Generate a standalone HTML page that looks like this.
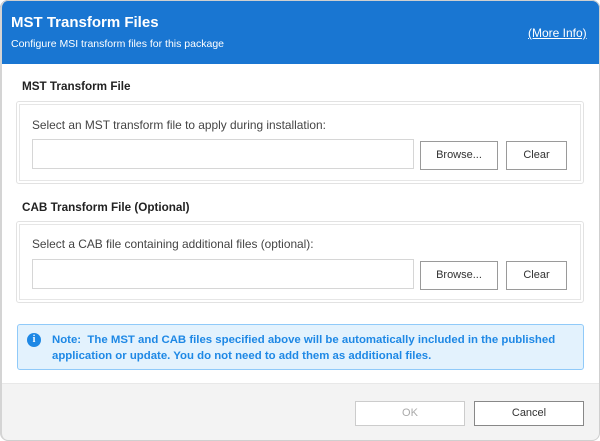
<!DOCTYPE html>
<html><head><style>
*{box-sizing:border-box;margin:0;padding:0}
body{width:600px;height:441px;background:#fff;font-family:"Liberation Sans",sans-serif;position:relative;overflow:hidden}
.win{position:absolute;left:0;top:0;width:600px;height:441px;border-radius:8px;overflow:hidden;background:#fff}
.frame{position:absolute;left:0;top:0;width:600px;height:441px;border:1px solid #cfcfcf;border-left:2px solid #d4d4d4;border-radius:8px;pointer-events:none}
.hdr{position:absolute;left:0;top:0;width:600px;height:64px;background:#1976d2;color:#fff}
.t{position:absolute;left:11px;top:14px;font-size:15px;font-weight:bold}
.st{position:absolute;left:11px;top:38px;font-size:10.5px}
.mi{position:absolute;left:528px;top:26px;font-size:12px;text-decoration:underline}
.lbl{position:absolute;left:22px;font-size:11.7px;font-weight:bold;color:#222}
.g{position:absolute;left:16px;width:568px;border:1px solid #e2e2e2;border-radius:3px}
.gi{position:absolute;left:2px;top:2px;right:2px;bottom:2px;border:1px solid #e6e6e6}
.sel{position:absolute;left:15px;font-size:11.9px;color:#444}
.in{position:absolute;width:382px;height:30px;border:1px solid #d6d6d6;background:#fff}
.b{position:absolute;height:29px;border:1px solid #9a9a9a;background:#fff;font-size:11px;color:#333;text-align:center;line-height:27px}
.note{position:absolute;left:17px;top:324px;width:567px;height:46px;background:#e3f2fd;border:1px solid #90caf9;border-radius:3px;color:#1e88e5;font-size:11.4px;font-weight:bold;line-height:16px;padding:7px 0 0 34px}
.ic{position:absolute;left:9px;top:8px;width:14px;height:14px;border-radius:50%;background:#1e88e5;color:#fff;font-size:10px;text-align:center;line-height:14px;font-family:"Liberation Serif",serif}
.ft{position:absolute;left:0;top:383px;width:600px;height:58px;background:#f3f3f3;border-top:1px solid #e8e8e8}
</style></head><body><div class="win">
<div class="hdr"><div class="t">MST Transform Files</div><div class="st">Configure MSI transform files for this package</div><div class="mi">(More Info)</div></div>
<div class="lbl" style="top:80px">MST Transform File</div>
<div class="g" style="top:101px;height:83px"><div class="gi"></div>
<div class="sel" style="top:16px">Select an MST transform file to apply during installation:</div>
<div class="in" style="left:15px;top:37px"></div>
<div class="b" style="left:403px;top:39px;width:78px">Browse...</div>
<div class="b" style="left:489px;top:39px;width:61px">Clear</div></div>
<div class="lbl" style="top:201px">CAB Transform File (Optional)</div>
<div class="g" style="top:221px;height:82px"><div class="gi"></div>
<div class="sel" style="top:15px">Select a CAB file containing additional files (optional):</div>
<div class="in" style="left:15px;top:37px"></div>
<div class="b" style="left:403px;top:39px;width:78px">Browse...</div>
<div class="b" style="left:489px;top:39px;width:61px">Clear</div></div>
<div class="note"><div class="ic">i</div>Note:&nbsp; The MST and CAB files specified above will be automatically included in the published application or update. You do not need to add them as additional files.</div>
<div class="ft">
<div class="b" style="left:355px;top:17px;width:110px;height:25px;line-height:23px;border-color:#ccc;color:#aaa">OK</div>
<div class="b" style="left:474px;top:17px;width:110px;height:25px;line-height:23px;border-color:#888">Cancel</div></div>
</div><div class="frame"></div></body></html>
